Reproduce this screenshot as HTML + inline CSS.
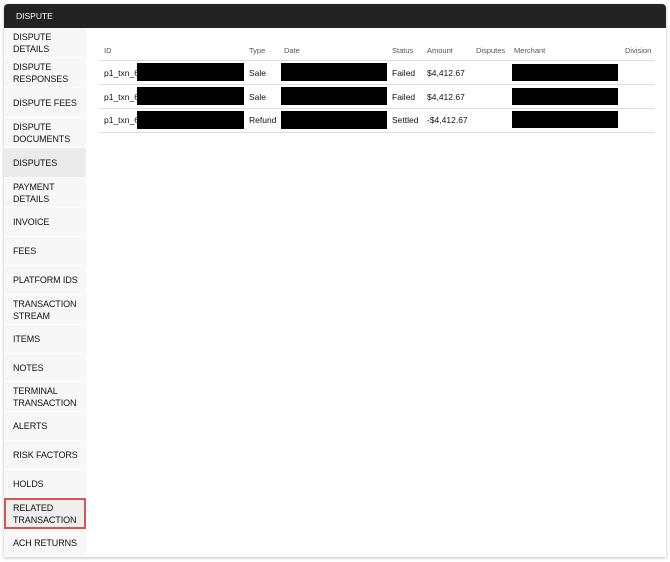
<!DOCTYPE html>
<html><head><style>
*{margin:0;padding:0;box-sizing:border-box}
body{width:670px;height:562px;background:#fff;font-family:"Liberation Sans",Arial,sans-serif;position:relative;overflow:hidden}
.panel{position:absolute;left:4px;top:4px;width:662px;height:553px;background:#fff;box-shadow:0 1px 3px rgba(0,0,0,.25);border-radius:4px 4px 0 0}
.hdr{position:absolute;left:4px;top:4px;width:662px;height:24px;background:#232323;border-radius:4px 4px 0 0;color:#fff;font-size:8.5px;line-height:24px;padding-left:12px}
.side{position:absolute;left:4px;top:28px;width:82px}
.it{position:absolute;left:0;width:82px;background:#f7f7f7;border-bottom:1px solid #fff;color:#111;font-size:9px;line-height:12px;padding-left:9px;display:flex;align-items:center;letter-spacing:-0.1px}
.sel{background:#ebebeb}
.red{border:2px solid #d9534f;background:#eee;padding-left:7px}
.t{position:absolute;font-size:7.5px;color:#555}
.r{position:absolute;font-size:8.5px;color:#111}
.line{position:absolute;left:99px;width:555px;height:1px;background:#ddd}
.b{position:absolute;background:#000;height:18px}
</style></head><body>
<div class="panel"></div>
<div class="hdr">DISPUTE</div>
<div class="side">
<div class="it" style="top:0;height:30px">DISPUTE<br>DETAILS</div>
<div class="it" style="top:30px;height:30px">DISPUTE<br>RESPONSES</div>
<div class="it" style="top:60px;height:30px">DISPUTE FEES</div>
<div class="it" style="top:90px;height:30px">DISPUTE<br>DOCUMENTS</div>
<div class="it sel" style="top:120px;height:30px">DISPUTES</div>
<div class="it" style="top:150px;height:30px">PAYMENT<br>DETAILS</div>
<div class="it" style="top:180px;height:29px">INVOICE</div>
<div class="it" style="top:209px;height:29px">FEES</div>
<div class="it" style="top:238px;height:29px">PLATFORM IDS</div>
<div class="it" style="top:267px;height:30px">TRANSACTION<br>STREAM</div>
<div class="it" style="top:297px;height:29px">ITEMS</div>
<div class="it" style="top:326px;height:28px">NOTES</div>
<div class="it" style="top:354px;height:30px">TERMINAL<br>TRANSACTION</div>
<div class="it" style="top:384px;height:29px">ALERTS</div>
<div class="it" style="top:413px;height:29px">RISK FACTORS</div>
<div class="it" style="top:442px;height:28px">HOLDS</div>
<div class="it red" style="top:470px;height:31px">RELATED<br>TRANSACTION</div>
<div class="it" style="top:501px;height:28px">ACH RETURNS</div>
</div>
<div class="t" style="left:104px;top:46px">ID</div>
<div class="t" style="left:249px;top:46px">Type</div>
<div class="t" style="left:284px;top:46px">Date</div>
<div class="t" style="left:392px;top:46px">Status</div>
<div class="t" style="left:427px;top:46px">Amount</div>
<div class="t" style="left:476px;top:46px">Disputes</div>
<div class="t" style="left:514px;top:46px">Merchant</div>
<div class="t" style="left:625px;top:46px">Division</div>
<div class="line" style="top:60px"></div>
<div class="line" style="top:84px"></div>
<div class="line" style="top:108px"></div>
<div class="line" style="top:132px"></div>

<div class="r" style="left:104px;top:68px">p1_txn_6</div>
<div class="b" style="left:137px;top:63px;width:107px"></div>
<div class="r" style="left:249px;top:68px">Sale</div>
<div class="b" style="left:281px;top:63px;width:106px"></div>
<div class="r" style="left:392px;top:68px">Failed</div>
<div class="r" style="left:427px;top:68px">$4,412.67</div>
<div class="b" style="left:512px;top:64px;width:106px;height:17px"></div>

<div class="r" style="left:104px;top:92px">p1_txn_6</div>
<div class="b" style="left:137px;top:87px;width:107px"></div>
<div class="r" style="left:249px;top:92px">Sale</div>
<div class="b" style="left:281px;top:87px;width:106px"></div>
<div class="r" style="left:392px;top:92px">Failed</div>
<div class="r" style="left:427px;top:92px">$4,412.67</div>
<div class="b" style="left:512px;top:88px;width:106px;height:17px"></div>

<div class="r" style="left:104px;top:115px">p1_txn_6</div>
<div class="b" style="left:137px;top:111px;width:107px"></div>
<div class="r" style="left:249px;top:115px">Refund</div>
<div class="b" style="left:281px;top:111px;width:106px"></div>
<div class="r" style="left:392px;top:115px">Settled</div>
<div class="r" style="left:427px;top:115px">-$4,412.67</div>
<div class="b" style="left:512px;top:111px;width:106px;height:17px"></div>
</body></html>
